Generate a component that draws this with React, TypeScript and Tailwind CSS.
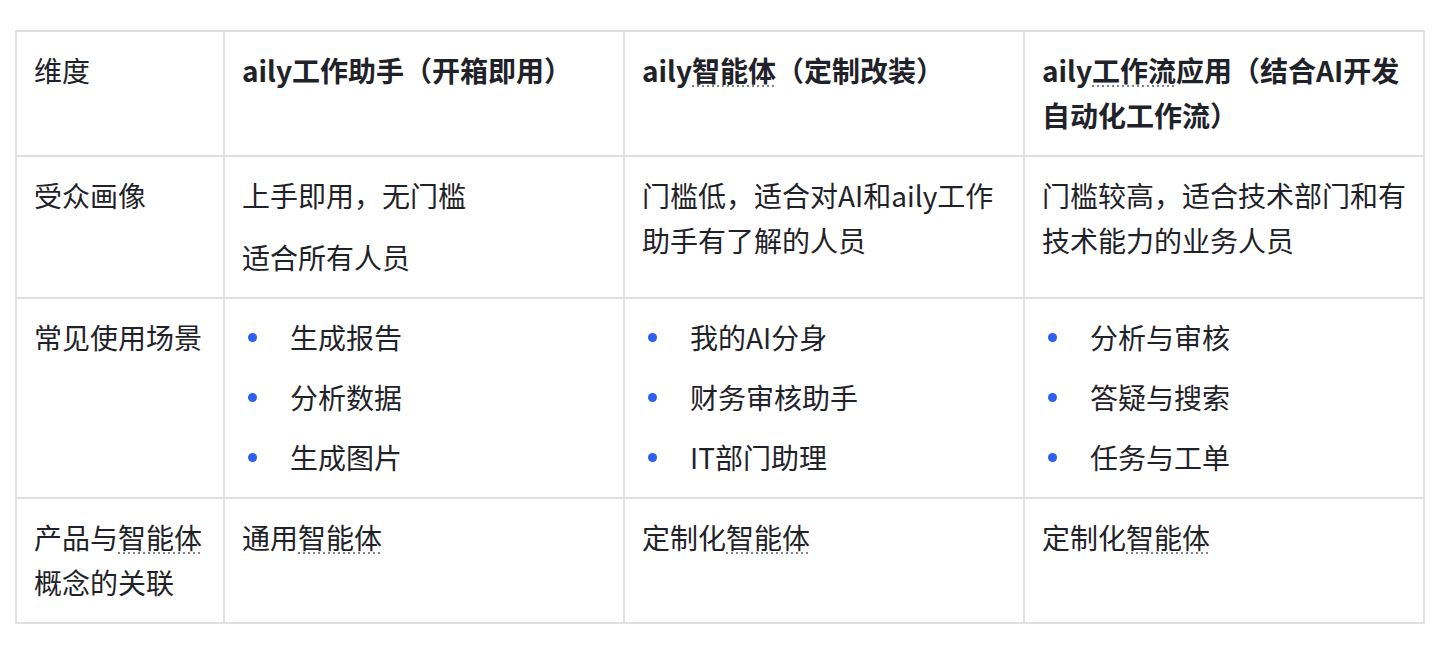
import React from 'react'

const font = { fontFamily: '"Noto Sans CJK SC", "Noto Sans", sans-serif' }

function Term({ children }: { children: React.ReactNode }) {
  return (
    <span className="bg-[linear-gradient(to_right,#80868f_2px,transparent_2px)] bg-[length:5px_2px] bg-repeat-x bg-[position:0_calc(100%-3px)]">
      {children}
    </span>
  )
}

function Bullets({ items }: { items: string[] }) {
  return (
    <ul className="flex flex-col gap-[15px]">
      {items.map((it) => (
        <li key={it} className="flex items-center">
          <span className="w-[48px] shrink-0">
            <span className="ml-[6px] block h-[9px] w-[9px] rounded-full bg-[#2f5ff0]" />
          </span>
          <span>{it}</span>
        </li>
      ))}
    </ul>
  )
}

const cell = 'border-r-2 border-b-2 border-[#dee0e3] pl-[17px] pr-[14px] pt-4 pb-[17px] align-top'

export default function App() {
  return (
    <div className="min-h-screen bg-white pt-[30px] pl-[15px]" style={font}>
      <table className="table-fixed border-separate border-spacing-0 border-l-2 border-t-2 border-[#dee0e3] text-[28px] leading-[45px] text-[#1f2329] w-[1410px]">
        <colgroup>
          <col className="w-[208px]" />
          <col className="w-[400px]" />
          <col className="w-[400px]" />
          <col className="w-[400px]" />
        </colgroup>
        <thead>
          <tr>
            <th className={`${cell} text-left font-normal`}>维度</th>
            <th className={`${cell} text-left font-semibold`}>aily工作助手（开箱即用）</th>
            <th className={`${cell} text-left font-semibold`}>
              aily<Term>智能体</Term>（定制改装）
            </th>
            <th className={`${cell} text-left font-semibold`}>
              aily<Term>工作流</Term>应用（结合AI开发自动化工作流）
            </th>
          </tr>
        </thead>
        <tbody>
          <tr>
            <td className={cell}>受众画像</td>
            <td className={cell}>
              <div className="flex flex-col gap-[17px]">
                <p>上手即用，无门槛</p>
                <p>适合所有人员</p>
              </div>
            </td>
            <td className={cell}>门槛低，适合对AI和aily工作助手有了解的人员</td>
            <td className={cell}>门槛较高，适合技术部门和有技术能力的业务人员</td>
          </tr>
          <tr>
            <td className={cell}>常见使用场景</td>
            <td className={cell}>
              <Bullets items={['生成报告', '分析数据', '生成图片']} />
            </td>
            <td className={cell}>
              <Bullets items={['我的AI分身', '财务审核助手', 'IT部门助理']} />
            </td>
            <td className={cell}>
              <Bullets items={['分析与审核', '答疑与搜索', '任务与工单']} />
            </td>
          </tr>
          <tr>
            <td className={cell}>
              产品与<Term>智能体</Term>概念的关联
            </td>
            <td className={cell}>
              通用<Term>智能体</Term>
            </td>
            <td className={cell}>
              定制化<Term>智能体</Term>
            </td>
            <td className={cell}>
              定制化<Term>智能体</Term>
            </td>
          </tr>
        </tbody>
      </table>
    </div>
  )
}
